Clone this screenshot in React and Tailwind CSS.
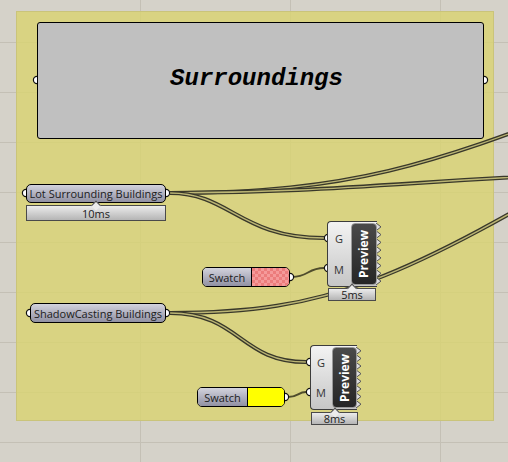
import React from "react";

const zigPath = (h, n, closed) => {
  const s = h / n;
  let d = "M0 0";
  for (let i = 0; i < n; i++) {
    d += ` L5 ${(i + 0.5) * s} L0 ${(i + 1) * s}`;
  }
  return closed ? d + " Z" : d;
};

const Wire = ({ d }) => (
  <g fill="none">
    <path d={d} stroke="#39382a" strokeWidth="4" />
    <path d={d} stroke="#bbb574" strokeWidth="1.4" />
  </g>
);

const Port = ({ x, y }) => (
  <circle cx={x} cy={y} r="3.6" fill="#fff" stroke="#111" strokeWidth="1.2" />
);

const Zigzag = ({ h }) => (
  <svg width="7" height={h} className="absolute left-full top-[2px] -ml-px overflow-visible">
    <path d={zigPath(h, 8, true)} fill="#dcdcdc" />
    <path d={zigPath(h, 8, false)} fill="none" stroke="#555" strokeWidth="1" />
  </svg>
);

const Timing = ({ label, className }) => (
  <div className={`relative border border-[#4a4a4a] bg-linear-to-b from-[#ececec] to-[#b5b5b5] flex items-center justify-center text-[11px] leading-none ${className}`}>
    <div className="absolute left-1/2 -top-[4px] w-[7px] h-[7px] -translate-x-1/2 rotate-45 border-l border-t border-[#4a4a4a] bg-[#ececec]" />
    <span className="relative">{label}</span>
  </div>
);

const PreviewBody = ({ h, labelW }) => (
  <div className="relative flex h-full">
    <div className="absolute inset-0 rounded-l-[4px] border-y border-l border-[#3c3c3c] bg-linear-to-b from-[#f3f3f3] to-[#c6c6c6]" />
    <Zigzag h={h - 4} />
    <div className={`relative flex flex-col items-center justify-around py-[2px] text-[11px] leading-none text-[#333] ${labelW}`}>
      <span>G</span>
      <span>M</span>
    </div>
    <div className="relative my-[2px] flex-1 rounded-[4px] border border-[#9a9a9a] bg-linear-to-b from-[#4a4a4a] to-[#262626] flex items-center justify-center">
      <span className="[writing-mode:vertical-rl] rotate-180 text-white font-bold text-[12px] leading-none">
        Preview
      </span>
    </div>
  </div>
);

export default function App() {
  return (
    <div className="relative w-[508px] h-[462px] overflow-hidden bg-[#d5d2c9] font-['Open_Sans',sans-serif] text-[#1c1c1c]">
      {/* canvas grid */}
      <svg className="absolute inset-0" width="508" height="462">
        <g stroke="#c4c0b5" strokeWidth="1">
          {[140.5, 290.5, 440.5].map((x) => (
            <line key={x} x1={x} y1="0" x2={x} y2="462" />
          ))}
          {[42.5, 92.5, 142.5, 192.5, 242.5, 292.5, 342.5, 392.5, 442.5].map((y) => (
            <line key={y} x1="0" y1={y} x2="508" y2={y} />
          ))}
        </g>
      </svg>

      {/* group */}
      <div className="absolute left-[16px] top-[11px] w-[478px] h-[410px] border border-[#cac47a] bg-[rgba(218,211,112,0.8)]" />

      {/* wires + ports */}
      <svg className="absolute inset-0" width="508" height="462">
        <Wire d="M170 193 C360 193 440 160 600 100" />
        <Wire d="M170 193 C330 193 420 180 620 172" />
        <Wire d="M170 193 C230 193 240 238 324 238" />
        <Wire d="M170 313 C330 313 400 280 620 150" />
        <Wire d="M170 313 C240 313 240 362 306 362" />
        <path d="M292 277 C308 277 308 268 324 268" fill="none" stroke="#4f4c2c" strokeWidth="2" />
        <path d="M288 397 C298 397 298 392 306 392" fill="none" stroke="#4f4c2c" strokeWidth="2" />

        <Port x={37} y={80} />
        <Port x={484} y={80} />
        <Port x={26} y={193} />
        <Port x={166} y={193} />
        <Port x={30} y={313} />
        <Port x={166} y={313} />
        <Port x={290} y={277} />
        <Port x={285} y={397} />
        <Port x={328} y={238} />
        <Port x={328} y={268} />
        <Port x={310} y={362} />
        <Port x={310} y={392} />
      </svg>

      {/* panel */}
      <div className="absolute left-[37px] top-[22px] w-[447px] h-[117px] rounded-[3px] border border-black bg-[#c0c0c0] flex items-center justify-center pr-2 pb-1">
        <span className="font-['Liberation_Mono',monospace] font-bold italic text-[24px] text-black">
          Surroundings
        </span>
      </div>

      {/* Lot Surrounding Buildings */}
      <div className="absolute left-[26px] top-[184px] w-[140px] flex flex-col gap-[2px]">
        <div className="h-[19px] rounded-[5px] border border-black bg-linear-to-b from-[#d3d3dd] to-[#9191a3] flex items-center justify-center text-[11px] leading-none">
          Lot Surrounding Buildings
        </div>
        <Timing label="10ms" className="h-[16px]" />
      </div>

      {/* ShadowCasting Buildings */}
      <div className="absolute left-[30px] top-[303px] w-[136px] h-[20px] rounded-[5px] border border-black bg-linear-to-b from-[#d3d3dd] to-[#9191a3] flex items-center justify-center text-[11px] leading-none">
        ShadowCasting Buildings
      </div>

      {/* Swatch 1 */}
      <div className="absolute left-[202px] top-[267px] w-[88px] h-[20px] rounded-[5px] border border-black overflow-hidden flex">
        <div className="w-[48px] h-full bg-linear-to-b from-[#d3d3dd] to-[#9191a3] flex items-center justify-center text-[11px] leading-none">
          Swatch
        </div>
        <div className="flex-1 h-full border-l border-black bg-[repeating-conic-gradient(#f59a9a_0%_25%,#ec7c7c_0%_50%)] bg-[length:6px_6px]" />
      </div>

      {/* Preview 1 */}
      <div className="absolute left-[327px] top-[221px] w-[50px] flex flex-col gap-px">
        <div className="h-[66px]">
          <PreviewBody h={66} labelW="w-[24px]" />
        </div>
        <Timing label="5ms" className="ml-px w-[48px] h-[13px]" />
      </div>

      {/* Swatch 2 */}
      <div className="absolute left-[197px] top-[387px] w-[88px] h-[20px] rounded-[5px] border border-black overflow-hidden flex">
        <div className="w-[49px] h-full bg-linear-to-b from-[#d3d3dd] to-[#9191a3] flex items-center justify-center text-[11px] leading-none">
          Swatch
        </div>
        <div className="flex-1 h-full border-l border-black bg-[#ffff00]" />
      </div>

      {/* Preview 2 */}
      <div className="absolute left-[310px] top-[345px] w-[47px] flex flex-col gap-[2px]">
        <div className="h-[65px]">
          <PreviewBody h={65} labelW="w-[22px]" />
        </div>
        <Timing label="8ms" className="ml-px w-[47px] h-[13px]" />
      </div>
    </div>
  );
}
